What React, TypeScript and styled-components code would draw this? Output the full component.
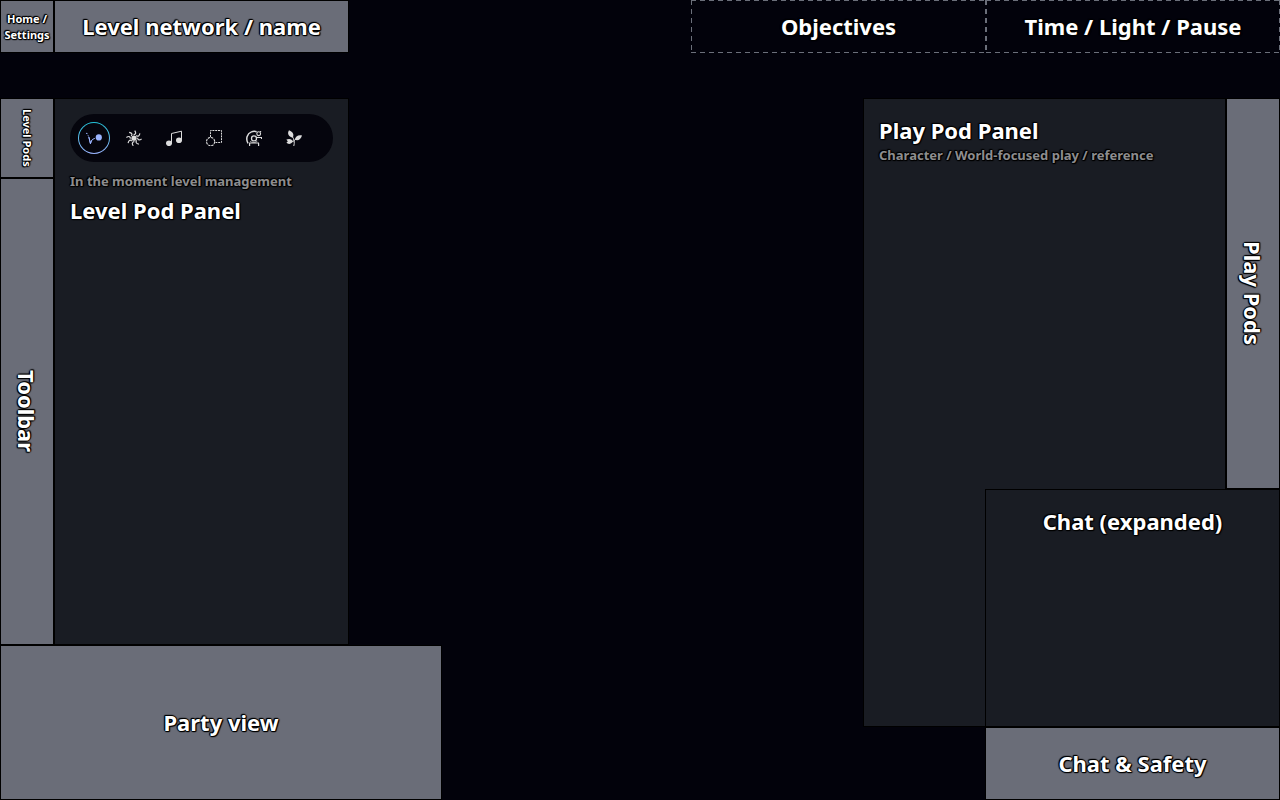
import React from "react";
import styled, { createGlobalStyle, css } from "styled-components";

const color = {
  page: "#02020b",
  block: "#6a6d78",
  panel: "#191c23",
  line: "#000000",
  dash: "#6b6f7a",
  muted: "#8d8d8f",
  icon: "#dcdcdc",
  active: "#9bb4ff",
};

const GlobalStyle = createGlobalStyle`
  *, *::before, *::after { box-sizing: border-box; }
  body {
    margin: 0;
    background: ${color.page};
    color: #ffffff;
    font-family: "Noto Sans", "Open Sans", sans-serif;
    font-weight: 700;
  }
  h1, h2, p { margin: 0; font-weight: 700; }
`;

const outline = css`
  text-shadow: 1px 0 1px #000, -1px 0 1px #000, 0 1px 1px #000, 0 -1px 1px #000,
    1px 1px 1px #000, -1px -1px 1px #000;
`;

const Page = styled.div`
  display: flex;
  flex-direction: column;
  min-height: 100vh;
`;

const Header = styled.header`
  display: flex;
  justify-content: space-between;
  height: 53px;
  margin-bottom: 45px;
`;

const HeaderGroup = styled.div`
  display: flex;
`;

const Main = styled.main`
  flex: 1;
  display: flex;
  justify-content: space-between;
`;

const LeftArea = styled.div`
  display: grid;
  grid-template-columns: 54px 295px 93px;
  grid-template-rows: 80px 1fr 155px;
  grid-template-areas:
    "pods panel ."
    "tools panel ."
    "party party party";
`;

const RightArea = styled.div`
  display: grid;
  grid-template-columns: 122px 241px 54px;
  grid-template-rows: 1fr 238px 73px;
`;

const Block = styled.section<{ $area?: string; $width?: number }>`
  display: flex;
  align-items: center;
  justify-content: center;
  text-align: center;
  background: ${color.block};
  border: 1px solid ${color.line};
  ${(p) => p.$area && `grid-area: ${p.$area};`}
  ${(p) => p.$width && `width: ${p.$width}px;`}
`;

const dashes = (direction: string) =>
  `repeating-linear-gradient(${direction}, ${color.dash} 0 5px, transparent 5px 9px)`;

const DashedBlock = styled(Block)`
  border: 0;
  background:
    ${dashes("to right")} top / 100% 1px no-repeat,
    ${dashes("to right")} bottom / 100% 1px no-repeat,
    ${dashes("to bottom")} left / 1px 100% no-repeat,
    ${dashes("to bottom")} right / 1px 100% no-repeat;
`;

const Panel = styled.section<{ $area: string; $centered?: boolean }>`
  grid-area: ${(p) => p.$area};
  padding: 15px;
  background: ${color.panel};
  border: 1px solid ${color.line};
  text-align: ${(p) => (p.$centered ? "center" : "left")};
`;

const Title = styled.h2<{ $vertical?: boolean; $small?: boolean }>`
  font-size: ${(p) => (p.$small ? 11 : 22)}px;
  line-height: ${(p) => (p.$small ? 16 : 32)}px;
  ${(p) => !p.$small && !p.$vertical && "padding-bottom: 2px;"}
  ${(p) => p.$vertical && "writing-mode: vertical-rl;"}
  ${outline}
`;

const Caption = styled.p`
  font-size: 13px;
  line-height: 14px;
  color: ${color.muted};
  ${outline}
`;

const LevelPanelText = styled.div`
  display: flex;
  flex-direction: column;
  gap: 6px;
  margin-top: 12px;
`;

const PodTabs = styled.nav`
  display: flex;
  gap: 8px;
  padding: 8px;
  border-radius: 24px;
  background: #05050d;
`;

const PodTab = styled.button<{ $active?: boolean }>`
  display: flex;
  align-items: center;
  justify-content: center;
  width: 32px;
  height: 32px;
  padding: 0;
  border: 1px solid transparent;
  border-radius: 50%;
  cursor: pointer;
  color: ${(p) => (p.$active ? color.active : color.icon)};
  background: ${(p) =>
    p.$active
      ? "linear-gradient(#05050d, #05050d) padding-box, linear-gradient(#22c3d8, #9bb4ff) border-box"
      : "transparent"};
`;

const Glyph = ({ children }: { children: React.ReactNode }) => (
  <svg width="16" height="16" viewBox="0 0 16 16" fill="none" stroke="currentColor" aria-hidden="true">
    {children}
  </svg>
);

const PathGlyph = () => (
  <Glyph>
    <circle cx="0.8" cy="3.4" r="0.7" fill="currentColor" stroke="none" />
    <path d="M1.8 4.9 2.2 5.7M2.6 6.6 4.5 13.4C4.9 11 5.8 9.3 8.8 8.4" strokeWidth="1" />
    <path d="M3 7.2 4.4 13.8 5.8 10.2" strokeWidth="1" />
    <circle cx="12.8" cy="7.4" r="3.1" fill="currentColor" stroke="none" />
  </Glyph>
);

const SunGlyph = () => (
  <Glyph>
    <circle cx="8" cy="8.2" r="2.6" fill="currentColor" stroke="none" />
    {[10, 55, 100, 145, 190, 235, 280, 325].map((angle) => (
      <path
        key={angle}
        d="M7 4.8C9.4 4.2 9.2 2.4 7.4 0.6"
        transform={`rotate(${angle} 8 8.2)`}
        strokeWidth="1.2"
      />
    ))}
  </Glyph>
);

const MusicGlyph = () => (
  <Glyph>
    <ellipse cx="3" cy="13.3" rx="3" ry="2.8" fill="currentColor" stroke="none" />
    <ellipse cx="13" cy="10.2" rx="3" ry="2.8" fill="currentColor" stroke="none" />
    <path d="M5.5 13.5V3.5L15.5 1.2V10.4" strokeWidth="1" />
  </Glyph>
);

const AreaGlyph = () => (
  <Glyph>
    <path d="M4.5 7V0.5H15.5V12.5H9.5" strokeWidth="1" strokeDasharray="2 0.8" />
    <circle cx="4.6" cy="11.6" r="4.1" strokeWidth="1.1" strokeDasharray="2.4 0.8" />
  </Glyph>
);

const ViewGlyph = () => (
  <Glyph>
    <path d="M2 13.4C-0.6 8.6 1.2 3.6 5.4 1.9C7.2 1.1 9 1.1 10.6 1.7" strokeWidth="1.5" />
    <circle cx="8" cy="8.4" r="2.5" strokeWidth="1.3" />
    <path d="M4 11.2C6 13 10 13 11.6 10.8" strokeWidth="0.7" />
    <circle cx="12.7" cy="3.7" r="1.9" strokeWidth="1.1" />
    <path d="M10.6 7.5H15.5V9M14.6 1V2" strokeWidth="1.1" />
    <path d="M3.6 16V13.2M12.6 16V13.2M3.2 13H13" strokeWidth="1.2" />
  </Glyph>
);

const LeafGlyph = () => (
  <Glyph>
    <path d="M3 0.2C7.2 1.8 8.2 5 6.7 7.6C2.4 6.6 1 3.4 3 0.2Z" fill="currentColor" stroke="none" />
    <path d="M16 5.4C14.8 9.6 12 11 8.8 9.7C9.2 6.2 12.4 4.4 16 5.4Z" fill="currentColor" stroke="none" />
    <path d="M0.4 9.6C3.4 8.4 6.2 9.2 7 11.6C5.2 14.4 2.2 14.6 0.4 12.8L1.8 11.4Z" fill="currentColor" stroke="none" />
    <path d="M6.4 6.8C8.2 9 8.8 12.4 7.8 16M8.2 10.6 10 8.8M6.4 11.4 8.2 10.8" strokeWidth="1" />
  </Glyph>
);

const tabs = [
  { name: "Paths", Icon: PathGlyph },
  { name: "Lighting", Icon: SunGlyph },
  { name: "Music", Icon: MusicGlyph },
  { name: "Areas", Icon: AreaGlyph },
  { name: "Views", Icon: ViewGlyph },
  { name: "Nature", Icon: LeafGlyph },
];

export default function App() {
  return (
    <>
      <GlobalStyle />
      <Page>
        <Header>
          <HeaderGroup>
            <Block $width={54}>
              <Title $small>Home / Settings</Title>
            </Block>
            <Block $width={295}>
              <Title>Level network / name</Title>
            </Block>
          </HeaderGroup>
          <HeaderGroup>
            <DashedBlock $width={295}>
              <Title>Objectives</Title>
            </DashedBlock>
            <DashedBlock $width={294}>
              <Title>Time / Light / Pause</Title>
            </DashedBlock>
          </HeaderGroup>
        </Header>
        <Main>
          <LeftArea>
            <Block $area="pods">
              <Title $small $vertical>Level Pods</Title>
            </Block>
            <Block $area="tools">
              <Title $vertical>Toolbar</Title>
            </Block>
            <Panel $area="panel">
              <PodTabs aria-label="Level pods">
                {tabs.map(({ name, Icon }, i) => (
                  <PodTab key={name} type="button" aria-label={name} $active={i === 0}>
                    <Icon />
                  </PodTab>
                ))}
              </PodTabs>
              <LevelPanelText>
                <Caption>In the moment level management</Caption>
                <Title>Level Pod Panel</Title>
              </LevelPanelText>
            </Panel>
            <Block $area="party">
              <Title>Party view</Title>
            </Block>
          </LeftArea>
          <RightArea>
            <Panel $area="1 / 1 / 3 / 3">
              <Title>Play Pod Panel</Title>
              <Caption>Character / World-focused play / reference</Caption>
            </Panel>
            <Block $area="1 / 3 / 2 / 4">
              <Title $vertical>Play Pods</Title>
            </Block>
            <Panel $area="2 / 2 / 3 / 4" $centered>
              <Title>Chat (expanded)</Title>
            </Panel>
            <Block $area="3 / 2 / 4 / 4">
              <Title>Chat &amp; Safety</Title>
            </Block>
          </RightArea>
        </Main>
      </Page>
    </>
  );
}
